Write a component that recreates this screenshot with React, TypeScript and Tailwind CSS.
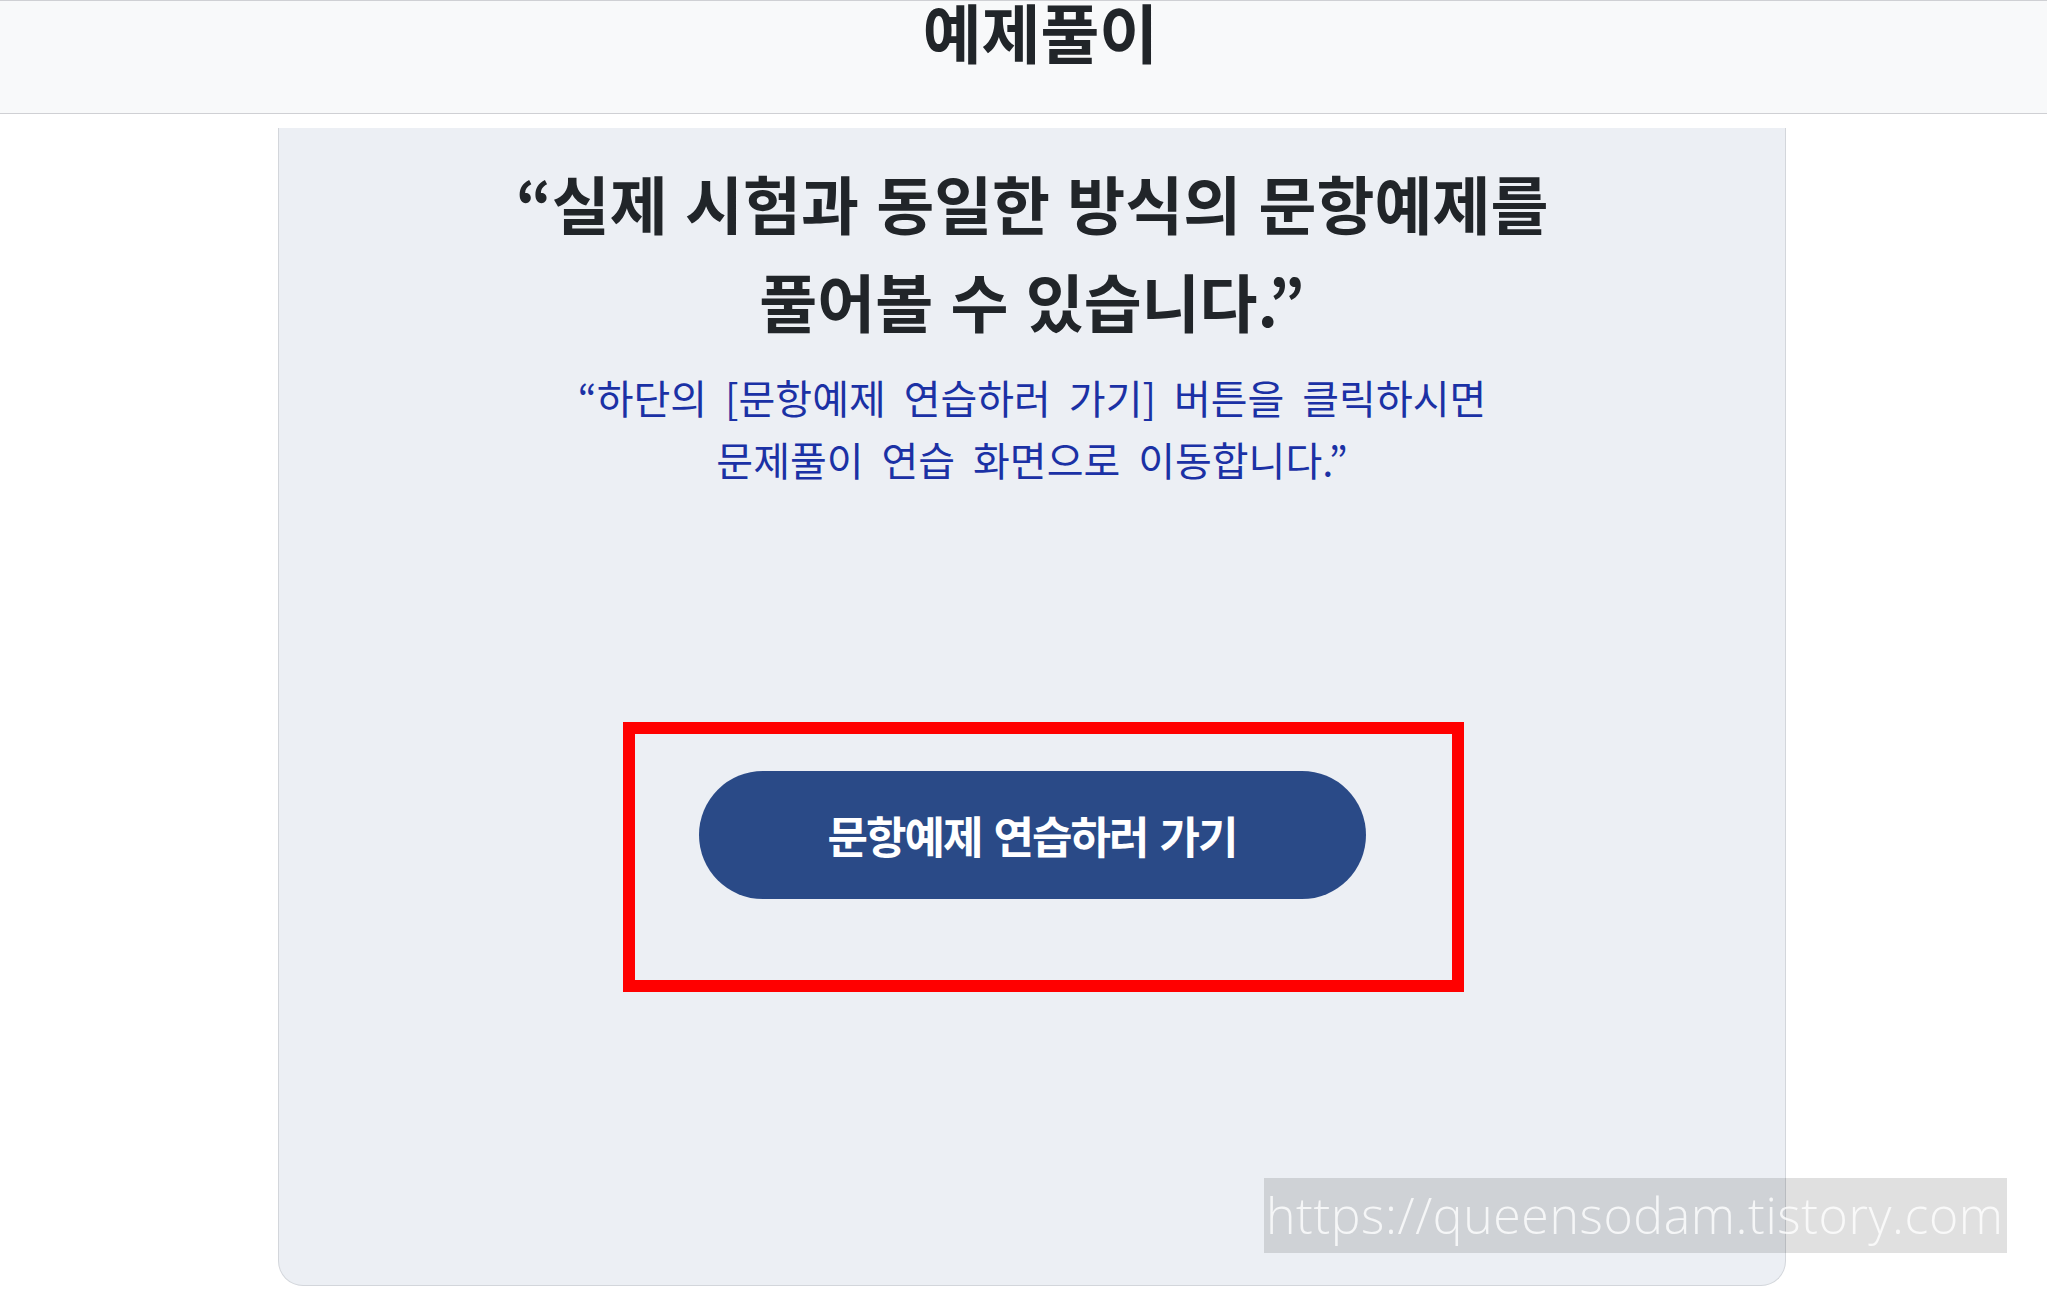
import React from "react";

const kr = { fontFamily: '"Noto Sans CJK KR", "Noto Sans", sans-serif' };

function PracticeButton() {
  return (
    <div className="relative">
      <button
        className="w-[667px] h-[128px] rounded-full bg-[#2a4a87] text-white text-[44px] font-bold tracking-[-2px] [word-spacing:4px]"
        style={kr}
      >
        문항예제 연습하러 가기
      </button>
      {/* red highlight box drawn over the page */}
      <span className="pointer-events-none absolute -left-[76px] -top-[49px] w-[841px] h-[270px] border-[12px] border-[#ff0000]" />
    </div>
  );
}

export default function App() {
  return (
    <div className="w-[2047px] h-[1293px] overflow-hidden bg-white" style={kr}>
      <header className="h-[114px] bg-[#f8f9fa] border-t border-b border-[#cfd0d4] flex justify-center">
        <h1 className="ml-[34px] text-[64px] font-bold text-[#212529] leading-[58px]">
          예제풀이
        </h1>
      </header>

      <div className="relative mt-[14px] ml-[278px] w-[1508px] h-[1158px] bg-[#eceff4] border-x border-b border-[#d3d6db] rounded-b-[25px] flex flex-col items-center">
        <h2 className="mt-[25px] text-center text-[63px] font-bold text-[#212529] leading-[98px] [word-spacing:3px]">
          “실제 시험과 동일한 방식의 문항예제를
          <br />
          풀어볼 수 있습니다.”
        </h2>
        <p className="mt-[17px] text-center text-[40px] text-[#1b31a5] leading-[62px] [word-spacing:9px]">
          “하단의 [문항예제 연습하러 가기] 버튼을 클릭하시면
          <br />
          문제풀이 연습 화면으로 이동합니다.”
        </p>
        <div className="mt-[281px]">
          <PracticeButton />
        </div>
      </div>

      {/* blog watermark */}
      <div
        className="absolute left-[1264px] top-[1178px] w-[743px] h-[75px] bg-black/[0.12] text-white/80 text-[50px] font-light leading-[75px] pl-[2px] tracking-[0.6px]"
        style={{ fontFamily: '"Open Sans", sans-serif' }}
      >
        https://queensodam.tistory.com
      </div>
    </div>
  );
}
